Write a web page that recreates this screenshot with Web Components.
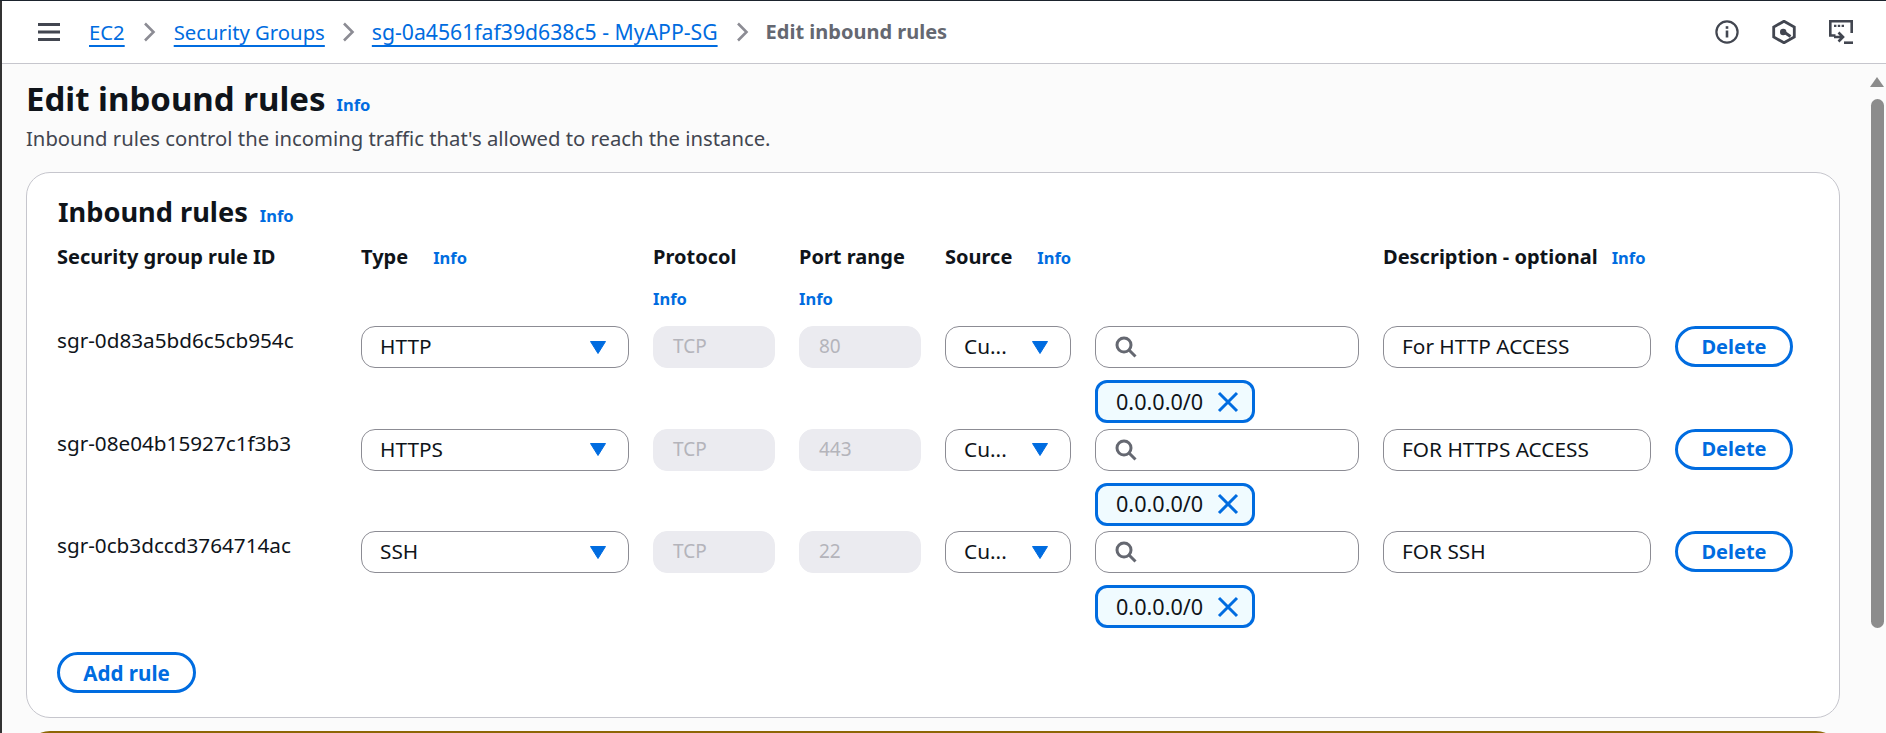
<!DOCTYPE html>
<html lang="en"><head><meta charset="utf-8"><title>Edit inbound rules</title>
<style>
html,body{margin:0;height:733px;overflow:hidden;background:#fbfbfb}
body{font-family:"Noto Sans","Open Sans",sans-serif;color:#0f141a;font-size:20px}
</style></head><body>
<aws-app>
  <aws-topbar slot="top"></aws-topbar>
  <aws-page>
    <aws-card>
      <aws-rule-head></aws-rule-head>
      <aws-rule rid="sgr-0d83a5bd6c5cb954c" type="HTTP" port="80" desc="For HTTP ACCESS"></aws-rule>
      <aws-rule rid="sgr-08e04b15927c1f3b3" type="HTTPS" port="443" desc="FOR HTTPS ACCESS"></aws-rule>
      <aws-rule rid="sgr-0cb3dccd3764714ac" type="SSH" port="22" desc="FOR SSH"></aws-rule>
      <aws-button class="add">Add rule</aws-button>
    </aws-card>
  </aws-page>
</aws-app>
<script>
const FONT='"Noto Sans","Open Sans",sans-serif';
const GRID='grid-template-columns:280px 268px 122px 122px 126px 264px 268px 118px;column-gap:24px;';
function def(name,html){
  customElements.define(name,class extends HTMLElement{
    constructor(){super();this.attachShadow({mode:'open'});}
    connectedCallback(){
      const get=k=>this.getAttribute(k)||'';
      this.shadowRoot.innerHTML=typeof html==='function'?html(get):html;
    }
  });
}
def('aws-info',`<style>:host{display:inline-block;font:700 16.5px/20px ${FONT};color:#006ce0}</style>Info`);
def('aws-crumb',`<style>:host{display:inline-block;font:400 20.3px/24px ${FONT};color:#006ce0;text-decoration:underline;text-decoration-thickness:2px;text-underline-offset:5px;white-space:nowrap}</style><slot></slot>`);
def('aws-sep',`<style>:host{display:inline-flex;width:15px;height:24px;align-items:center}svg{display:block}</style><svg width="15" height="24" viewBox="0 0 15 24" fill="none" stroke="#8c8c94" stroke-width="2.6"><path d="M3 3.500l8.500 8.500-8.500 8.500"/></svg>`);
def('aws-topbar',`<style>
:host{display:flex;align-items:center;height:62px;background:#fff;border-bottom:1px solid #c6c6cd;padding-left:36px;padding-right:33px}
.menu{display:block;margin-right:29px}
nav{display:flex;align-items:center;flex:1}
aws-sep{margin:0 17px 0 17px}
aws-sep.b{margin:0 16px 0 16px}
aws-sep.c{margin:0 16px 0 17px}
.cur{font:700 20px/24px ${FONT};color:#656871;white-space:nowrap}
.icons{display:flex;align-items:center;gap:33px}
svg{display:block}
</style>
<svg class="menu" width="22" height="18" viewBox="0 0 22 18" fill="#424650"><rect width="22" height="3"/><rect y="7.5" width="22" height="3"/><rect y="15" width="22" height="3"/></svg>
<nav><aws-crumb>EC2</aws-crumb><aws-sep></aws-sep><aws-crumb>Security Groups</aws-crumb><aws-sep class="b"></aws-sep><aws-crumb style="font-size:21.2px">sg-0a4561faf39d638c5 - MyAPP-SG</aws-crumb><aws-sep class="c"></aws-sep><span class="cur">Edit inbound rules</span></nav>
<div class="icons">
<svg width="24" height="24" viewBox="0 0 24 24" fill="none" stroke="#424650" stroke-width="2.2"><circle cx="12" cy="12" r="10.6"/><path d="M12 10.5v7" stroke-width="2.6"/><path d="M12 6.2v2.6" stroke-width="2.6"/></svg>
<svg width="24" height="24" viewBox="0 0 24 24" fill="none" stroke="#424650" stroke-width="2.800"><path d="M12 1.200l10.300 5.800v10L12 22.800 1.700 17V7z"/><circle cx="11.200" cy="12" r="3.200" fill="#424650" stroke="none"/><path d="M12 12l6.500 4.500"/></svg>
<svg width="24" height="24" viewBox="0 0 24 24" fill="none" stroke="#424650" stroke-width="2.600"><path d="M6.500 15.500H1.300V1.300h21.400V13"/><path d="M5 5.800h2.400M8.800 5.800h2.400M12.600 5.800h2.400" stroke-width="2.200"/><path d="M5 17h9M9.500 12.500L14 17l-4.500 4.500"/><path d="M15 22.700h9"/></svg>
</div>`);
def('aws-app',`<style>
:host{display:flex;flex-direction:column;height:732px;border-top:1px solid #1b232d;overflow:hidden}
.main{flex:1;display:flex;min-height:0;border-left:2px solid #333}
.top{border-left:2px solid #333}
.content{flex:1;min-width:0}
.track{width:18px;flex:none;display:flex;flex-direction:column;align-items:center}
.arrow{width:0;height:0;border-left:7.5px solid transparent;border-right:7.5px solid transparent;border-bottom:10px solid #8c8c8c;margin-top:13px}
.thumb{width:13px;height:529px;margin-top:12px;background:#8c8c8c;border-radius:7px}
</style>
<div class="top"><slot name="top"></slot></div>
<div class="main"><div class="content"><slot></slot></div><div class="track"><div class="arrow"></div><div class="thumb"></div></div></div>`);
def('aws-page',`<style>
:host{display:block;padding:20px 28px 0 24px;height:669px;box-sizing:border-box;overflow:hidden}
.t{display:flex;align-items:baseline;height:29px;line-height:29px}
h1{margin:0;font:700 33px/29px ${FONT};color:#0f141a;white-space:nowrap}
aws-info{margin-left:11px}
p{margin:14px 0 23px;font:400 20.25px/22px ${FONT};color:#424650;white-space:nowrap}
.warn{height:24px;margin:13px 0 0 0;background:#8d6605;border-radius:24px 24px 0 0}
</style>
<div class="t"><h1>Edit inbound rules</h1><aws-info></aws-info></div>
<p>Inbound rules control the incoming traffic that's allowed to reach the instance.</p>
<slot></slot>
<div class="warn"></div>`);
def('aws-card',`<style>
:host{display:block;height:546px;box-sizing:border-box;background:#fff;border:1px solid #c6c6cd;border-radius:24px;padding:24px 30px 0 30px}
.t{display:flex;align-items:baseline;height:30px;margin-bottom:18px}
h2{margin:0 0 0 1px;font:700 27.2px/30px ${FONT};color:#0f141a;white-space:nowrap}
aws-info{margin-left:12px}
</style>
<div class="t"><h2>Inbound rules</h2><aws-info></aws-info></div>
<slot></slot>`);
def('aws-rule-head',`<style>
:host{display:grid;${GRID}height:81px;box-sizing:border-box;align-content:start}
.l{font:700 20px/24px ${FONT};color:#0f141a;white-space:nowrap}
.c{display:flex;flex-direction:column;align-items:flex-start}
.r{display:flex;align-items:baseline}
.i2{margin-top:20px}
</style>
<div class="l">Security group rule ID</div>
<div class="c"><div class="r"><span class="l">Type</span><aws-info style="margin-left:25px"></aws-info></div></div>
<div class="c"><span class="l">Protocol</span><aws-info class="i2"></aws-info></div>
<div class="c"><span class="l">Port range</span><aws-info class="i2"></aws-info></div>
<div class="c"><div class="r"><span class="l">Source</span><aws-info style="margin-left:25px"></aws-info></div></div>
<div></div>
<div class="r"><span class="l">Description - optional</span><aws-info style="margin-left:14px"></aws-info></div>
<div></div>`);
def('aws-select',`<style>
:host{display:flex;align-items:center;justify-content:space-between;box-sizing:border-box;height:42px;background:#fff;border:1px solid #8c8c94;border-radius:14px;padding:0 22px 0 18px;font:400 20.8px/24px ${FONT};color:#0f141a}
span{margin-top:-2px}
svg{display:block;flex:none}
</style><span><slot></slot></span><svg width="16" height="13" viewBox="0 0 16 13"><path d="M.5 .5h15L8 12.500z" fill="#006ce0" stroke="#006ce0" stroke-width="1" stroke-linejoin="round"/></svg>`);
def('aws-field',`<style>
:host{display:flex;align-items:center;box-sizing:border-box;height:42px;border-radius:14px;padding:0 18px 2px;font:400 20.8px/24px ${FONT};color:#0f141a;background:#fff;border:1px solid #8c8c94;white-space:nowrap}
:host([disabled]){font-size:19px;padding-left:19px;background:#ebebf0;border-color:#ebebf0;color:#b4b4bb}
</style><slot></slot>`);
def('aws-search',`<style>
:host{display:flex;align-items:center;box-sizing:border-box;height:42px;border-radius:14px;padding:0 19px;background:#fff;border:1px solid #8c8c94}
svg{display:block}
</style><svg width="22" height="22" viewBox="0 0 22 22" fill="none" stroke="#656871" stroke-width="3"><circle cx="9" cy="9" r="7"/><path d="M14 14l6.500 6.500"/></svg>`);
def('aws-token',`<style>
:host{display:flex;align-items:center;justify-content:space-between;box-sizing:border-box;width:160px;height:43px;margin-top:12px;border:3px solid #006ce0;border-radius:12px;background:#f0fbff;padding:0 13px 0 18px;font:400 21.6px/24px ${FONT};color:#0f141a}
svg{display:block}
</style><span><slot></slot></span><svg width="22" height="22" viewBox="0 0 22 22" fill="none" stroke="#006ce0" stroke-width="3"><path d="M2 2l18 18M20 2L2 20"/></svg>`);
def('aws-button',`<style>
:host{display:inline-flex;align-items:center;justify-content:center;box-sizing:border-box;height:41px;border:3px solid #006ce0;border-radius:21px;font:700 20px/24px ${FONT};color:#006ce0;background:#fff;white-space:nowrap}
:host(.add){width:139px;margin-top:18.5px;font-size:20.6px}
</style><slot></slot>`);
def('aws-rule',g=>`<style>
:host{display:grid;${GRID}height:102.5px;align-items:start}
.id{font:400 20.7px/24px ${FONT};color:#0f141a;margin-top:2px;white-space:nowrap}
</style>
<div class="id">${g('rid')}</div>
<aws-select>${g('type')}</aws-select>
<aws-field disabled>TCP</aws-field>
<aws-field disabled>${g('port')}</aws-field>
<aws-select>Cu...</aws-select>
<div><aws-search></aws-search><aws-token>0.0.0.0/0</aws-token></div>
<aws-field>${g('desc')}</aws-field>
<aws-button class="del">Delete</aws-button>`);
</script>
</body></html>
